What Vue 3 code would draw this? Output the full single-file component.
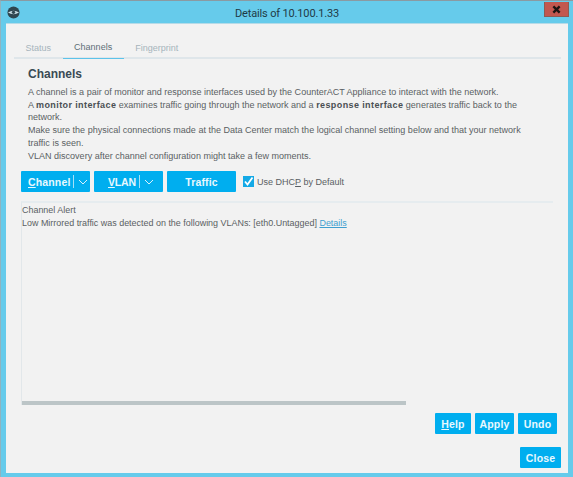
<script setup>
const tabs = [
  { label: 'Status', active: false },
  { label: 'Channels', active: true },
  { label: 'Fingerprint', active: false }
]
</script>

<template>
  <div class="window">
    <header class="titlebar">
      <svg class="logo" viewBox="0 0 14 14" width="13" height="13">
        <circle cx="7" cy="7" r="6.5" fill="#2f4650" />
        <path d="M1 7 Q7 3 13 7 Q7 10.5 1 7Z" fill="#c9dfe6" />
        <circle cx="7" cy="6.8" r="1.8" fill="#2f4650" />
      </svg>
      <span class="title">Details of 10.100.1.33</span>
      <button class="close-x">
        <svg viewBox="0 0 10 10" width="9" height="9">
          <path d="M1.5 1.5 L8.5 8.5 M8.5 1.5 L1.5 8.5" stroke="#1c1412" stroke-width="2.6" />
        </svg>
      </button>
    </header>
    <main class="client">
      <nav class="tabs">
        <span v-for="t in tabs" :key="t.label" class="tab" :class="{ active: t.active }">{{ t.label }}</span>
      </nav>
      <section class="content">
        <h1>Channels</h1>
        <p>A channel is a pair of monitor and response interfaces used by the CounterACT Appliance to interact with the network.</p>
        <p>A <b>monitor interface</b> examines traffic going through the network and a <b>response interface</b> generates traffic back to the<br />network.</p>
        <p>Make sure the physical connections made at the Data Center match the logical channel setting below and that your network<br />traffic is seen.</p>
        <p>VLAN discovery after channel configuration might take a few moments.</p>
      </section>
      <div class="toolbar">
        <button class="btn wide split"><span class="lbl channel"><u>C</u>hannel</span><i class="sep"></i>
          <svg class="chev" viewBox="0 0 10 6" width="10" height="6"><path d="M1 1 L5 5 L9 1" fill="none" stroke="#d9f2fd" stroke-width="1" /></svg>
        </button>
        <button class="btn wide split"><span class="lbl vlan"><u>V</u>LAN</span><i class="sep"></i>
          <svg class="chev" viewBox="0 0 10 6" width="10" height="6"><path d="M1 1 L5 5 L9 1" fill="none" stroke="#d9f2fd" stroke-width="1" /></svg>
        </button>
        <button class="btn wide">Traffic</button>
        <label class="check">
          <span class="box">
            <svg viewBox="0 0 11 11" width="11" height="11"><path d="M2 5.5 L4.5 8.5 L9.5 1.5" fill="none" stroke="#fff" stroke-width="1.8" /></svg>
          </span>
          <span>Use DHC<u>P</u> by Default</span>
        </label>
      </div>
      <div class="panel">
        <div class="panel-text">
          <div>Channel Alert</div>
          <div>Low Mirrored traffic was detected on the following VLANs: [eth0.Untagged] <a>Details</a></div>
        </div>
        <div class="scrollbar"></div>
      </div>
      <div class="actions">
        <button class="btn help"><u>H</u>elp</button>
        <button class="btn small">Apply</button>
        <button class="btn small">Undo</button>
      </div>
      <div class="footer">
        <button class="btn close">Close</button>
      </div>
    </main>
  </div>
</template>

<style>
html, body { margin: 0; background: #66cbeb; }
</style>

<style scoped>
.window {
  box-sizing: border-box;
  width: 573px;
  height: 477px;
  background: #66cbeb;
  border-top: 1px solid #8a9aa2;
  border-left: 1px solid #8fb4c0;
  padding: 0 5px 4px 5px;
  display: flex;
  flex-direction: column;
  font-family: "Liberation Sans", Arial, sans-serif;
  overflow: hidden;
}
.titlebar {
  height: 22px;
  flex: none;
  display: flex;
  align-items: center;
  position: relative;
  justify-content: center;
}
.logo { position: absolute; left: 1px; top: 5px; }
.title { font-size: 11px; letter-spacing: -0.15px; color: #1f3a46; font-family: Roboto, sans-serif; margin-top: 2px; }
.close-x {
  position: absolute;
  right: -1px;
  top: 1px;
  width: 25px;
  height: 15px;
  padding: 0;
  border: 1px solid #8f5a52;
  border-top: none;
  background: #c2574f;
  display: flex;
  align-items: center;
  justify-content: center;
}
.client {
  flex: 1;
  background: #f2f2f2;
  border-top: 1px solid #b6dbe8;
  display: flex;
  flex-direction: column;
  padding: 0 7px 0 8px;
  min-height: 0;
}
.tabs {
  display: flex;
  height: 33px;
  align-items: flex-end;
  border-bottom: 2px solid #dfe6ea;
}
.tab {
  padding: 0 11.5px 4px;
  color: #a6b4bc;
  font-size: 9.03px;
  margin-bottom: -2px;
  border-bottom: 2px solid transparent;
}
.tab.active {
  color: #5d6e78;
  border-bottom: 1px solid #5cc3ea;
  padding: 0 11.5px 6px;
}
.content { padding: 7px 0 0 14px; color: #5a5f63; font-size: 9.03px; line-height: 12.7px; }
h1 { margin: 0 0 4px; font-size: 12px; line-height: 16px; color: #3a4a54; font-weight: 700; }
p { margin: 0; }
b { color: #4a4f53; letter-spacing: 0.39px; }
.toolbar {
  display: flex;
  align-items: center;
  gap: 4px;
  margin-top: 9px;
  padding-left: 7px;
}
.btn {
  border: none;
  background: #00aeef;
  color: #e8f8fe;
  font-family: "Liberation Sans", Arial, sans-serif;
  font-weight: 700;
  border-radius: 1px;
  padding: 0;
  letter-spacing: 0.15px;
  font-size: 10.5px;
}
.wide { width: 69px; height: 21px; }
.split { display: flex; align-items: center; }
.lbl.channel { margin-left: 7px; }
.lbl.vlan { margin-left: 14px; letter-spacing: -0.2px; }
.sep { width: 1px; height: 13px; background: #a5e0f8; margin: 0 4px 0 3px; }
.check { display: flex; align-items: center; gap: 3px; margin-left: 3px; font-size: 9.03px; color: #5a5f63; }
.box { width: 11px; height: 11px; background: #14a9e6; display: flex; align-items: center; justify-content: center; }
.panel {
  margin: 9px 8px 0 7px;
  height: 202px;
  border-top: 2px solid #e6ecef;
  border-left: 1px solid #e2e7ea;
  display: flex;
  flex-direction: column;
  font-size: 8.95px;
  line-height: 12.6px;
  color: #5a5f63;
}
.panel-text { flex: 1; padding-top: 1px; }
a { color: #3f9fd0; text-decoration: underline; }
.scrollbar { width: 384px; height: 4px; background: #bcc5c7; }
.actions { display: flex; justify-content: flex-end; gap: 4px; margin-top: 8px; padding-right: 4px; }
.help { height: 21px; width: 36px; }
.small { height: 21px; width: 39px; }
.footer { display: flex; justify-content: flex-end; margin-top: 13px; }
.close { height: 21px; width: 41px; }
</style>
